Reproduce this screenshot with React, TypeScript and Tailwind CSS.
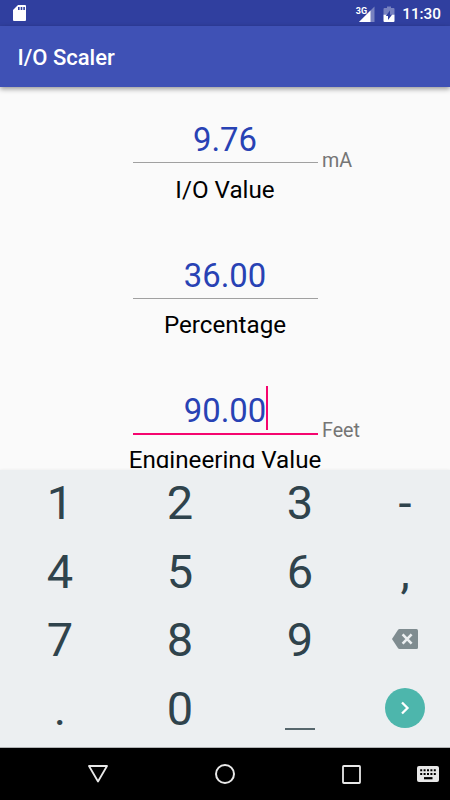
import { useState } from 'react';
import clsx from 'clsx';

type FieldId = 'io' | 'percent' | 'engineering';

const fields: { id: FieldId; label: string; value: string; unit?: string }[] = [
  { id: 'io', label: 'I/O Value', value: '9.76', unit: 'mA' },
  { id: 'percent', label: 'Percentage', value: '36.00' },
  { id: 'engineering', label: 'Engineering Value', value: '90.00', unit: 'Feet' },
];

function StatusBar() {
  return (
    <div className="flex h-[26px] shrink-0 items-center justify-between bg-[#303f9f] pl-[13px] pr-[9px] text-white">
      <svg width="13" height="16" viewBox="0 0 13 16">
        <path d="M5 0h7a1 1 0 0 1 1 1v14a1 1 0 0 1-1 1H1a1 1 0 0 1-1-1V5z" fill="#fff" />
        <path d="M5 2h1.6v3H5zM7.7 2h1.6v3H7.7zM10.3 2h1.6v3h-1.6z" fill="#303f9f" />
      </svg>
      <div className="flex items-center pt-[2px]">
        <svg width="20" height="17" viewBox="0 0 20 17" className="mr-[8px] overflow-visible">
          <path d="M19.500 .5V16H4z" fill="#fff" fillOpacity=".35" />
          <path d="M15.500 4.500V16H4z" fill="#fff" />
          <path d="M0 0h11v7.500l-2 1.500H0z" fill="#303f9f" />
          <text x="0.8" y="7.600" fill="#fff" fontSize="9" fontWeight="700">3G</text>
        </svg>
        <svg width="12" height="17" viewBox="0 0 12 17" className="mr-[7px]">
          <path d="M4 .5h4V2h2.5a1 1 0 0 1 1 1v6H.5V3a1 1 0 0 1 1-1H4z" fill="#fff" fillOpacity=".35" />
          <path d="M.5 8.7h11V15a1 1 0 0 1-1 1h-9a1 1 0 0 1-1-1z" fill="#fff" />
          <path d="M7 4.5v4h2.2L5 14v-4H2.8z" fill="#303f9f" />
        </svg>
        <span className="text-[15.3px] leading-[26px] font-medium">11:30</span>
      </div>
    </div>
  );
}

function Field({ label, value, unit, focused, onFocus }: {
  label: string;
  value: string;
  unit?: string;
  focused: boolean;
  onFocus: () => void;
}) {
  return (
    <div
      className="grid h-[135.3px] shrink-0 grid-cols-[132.5px_185px_1fr] grid-rows-[55.5px_28px] items-start"
      onClick={onFocus}
    >
      <div
        className={clsx(
          'col-start-2 flex justify-center text-[32.8px] leading-[40px] text-[#2842b4]',
          focused ? 'h-[44.5px] border-b-2 border-[#f5056f]' : 'h-[43px] border-b border-[#a0a0a0]',
        )}
      >
        <span className="relative">
          {value}
          {focused && <span className="absolute top-[-5px] right-[-2px] h-[44px] w-[2px] bg-[#f5056f]" />}
        </span>
      </div>
      <div className="pt-[28.6px] pl-[4.5px] text-[19.7px] leading-[24px] text-[#757575]">{unit}</div>
      <div className="col-span-3 col-start-1 text-center text-[24.2px] leading-[28px] whitespace-nowrap text-black">
        {label}
      </div>
    </div>
  );
}

function Key({ label }: { label: string }) {
  return (
    <button type="button" className="flex items-start justify-center text-[47px] leading-[66px] text-[#2f434c]">
      {label}
    </button>
  );
}

function Keyboard() {
  return (
    <div className="relative grid h-[278px] shrink-0 grid-cols-[120px_120px_120px_90px] grid-rows-[repeat(4,68.6px)] border-b border-[#b0b3b5] bg-[#eceff1] shadow-[0_0_3px_rgba(0,0,0,0.07)]">
      {['1', '2', '3', '-', '4', '5', '6', ',', '7', '8', '9'].map((k) => <Key key={k} label={k} />)}
      <button type="button" className="flex items-center justify-center pb-[4px]">
        <svg width="26" height="20" viewBox="0 0 26 20">
          <path d="M7.5 0H24.5A1.5 1.5 0 0 1 26 1.5v17a1.5 1.5 0 0 1-1.5 1.5H7.5Q6.5 20 5.9 19.1L0 10 5.9.9Q6.5 0 7.5 0z" fill="#7f8c90" />
          <path d="M10.6 5.4l9 9.2M19.6 5.4l-9 9.2" stroke="#eceff1" strokeWidth="2.6" />
        </svg>
      </button>
      <Key label="." />
      <Key label="0" />
      <button type="button" className="flex items-start justify-center pt-[52px]">
        <span className="h-[2px] w-[30px] bg-[#57676d]" />
      </button>
      <button type="button" className="flex items-center justify-center pb-[4px]">
        <span className="flex h-[40px] w-[40px] items-center justify-center rounded-full bg-[#4db6ac]">
          <svg width="10" height="14" viewBox="0 0 10 14">
            <path d="M2 1.5L7.5 7 2 12.5" fill="none" stroke="#fff" strokeWidth="2.3" />
          </svg>
        </span>
      </button>
    </div>
  );
}

function NavBar() {
  return (
    <div className="flex h-[52px] shrink-0 items-center bg-black pl-[88px] text-[#e8e8e8]">
      <svg width="20" height="18" viewBox="0 0 20 18">
        <path d="M1 1h18l-9 15.5z" fill="none" stroke="currentColor" strokeWidth="1.8" strokeLinejoin="round" />
      </svg>
      <svg width="20" height="20" viewBox="0 0 20 20" className="ml-[107px]">
        <circle cx="10" cy="10" r="9" fill="none" stroke="currentColor" strokeWidth="2" />
      </svg>
      <svg width="19" height="19" viewBox="0 0 19 19" className="ml-[107px]">
        <rect x="1" y="1" width="17" height="17" rx=".8" fill="none" stroke="currentColor" strokeWidth="1.8" />
      </svg>
      <svg width="22" height="16" viewBox="0 0 22 16" className="ml-[56px]">
        <rect width="22" height="16" rx="2" fill="currentColor" />
        <path d="M3.2 4.3h16M3.2 8h16" stroke="#000" strokeWidth="2" strokeDasharray="2 1.4" />
        <path d="M7 12.2h8.5" stroke="#000" strokeWidth="2.2" />
      </svg>
    </div>
  );
}

export default function App() {
  const [activeField, setActiveField] = useState<FieldId>('engineering');

  return (
    <div className="flex h-[800px] w-[450px] flex-col overflow-hidden bg-[#fafafa] font-[Roboto,sans-serif]">
      <StatusBar />
      <header className="relative flex h-[61px] shrink-0 items-center bg-[#3f51b5] pt-[3px] pl-[17.5px] shadow-[0_2px_5px_rgba(0,0,0,0.4)]">
        <h1 className="text-[22px] leading-[28px] font-medium text-white">I/O Scaler</h1>
      </header>
      <main className="h-[383px] shrink-0 overflow-hidden pt-[33.3px]">
        <div className="flex h-[348.2px] flex-col overflow-hidden">
          {fields.map((f) => (
            <Field
              key={f.id}
              label={f.label}
              value={f.value}
              unit={f.unit}
              focused={activeField === f.id}
              onFocus={() => setActiveField(f.id)}
            />
          ))}
        </div>
      </main>
      <Keyboard />
      <NavBar />
    </div>
  );
}
